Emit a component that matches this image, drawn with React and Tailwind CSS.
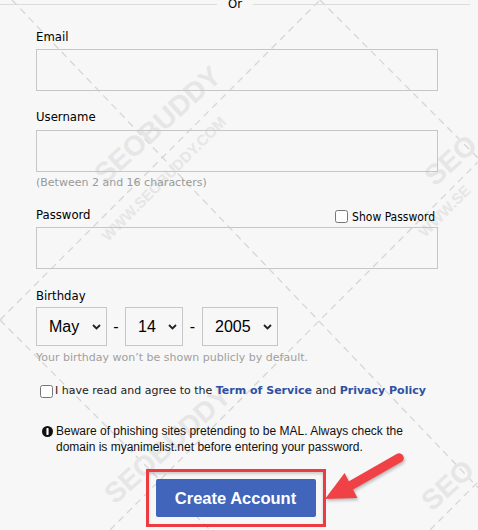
import React from 'react';

const tahoma = "font-['DejaVu_Sans_Condensed','Liberation_Sans',sans-serif]";
const verdana = "font-['DejaVu_Sans','Liberation_Sans',sans-serif]";
const arial = "font-['Liberation_Sans',Arial,sans-serif]";

const Chevron = () => (
    <svg className="absolute right-[5px] top-1/2 -translate-y-1/2 pointer-events-none" width="9" height="6" viewBox="0 0 9 6">
        <path d="M1 1l3.5 3.5L8 1" fill="none" stroke="#222" strokeWidth="1.8" />
    </svg>
);

const DateSelect = ({ width, value, options }) => (
    <div className={`relative h-[39px] border border-[#c6c6c6] ${width}`}>
        <select defaultValue={value} className={`appearance-none w-full h-full bg-transparent pl-[12px] text-[16px] text-black outline-none ${arial}`}>
            {options.map(o => <option key={o}>{o}</option>)}
        </select>
        <Chevron />
    </div>
);

const Field = ({ label, className = '' }) => (
    <label className={`block h-[16px] leading-[16px] text-[13px] text-black ${tahoma} ${className}`}>{label}</label>
);

// watermark overlay from the screenshot tool
const Watermark = () => (
    <svg className="absolute inset-0 pointer-events-none" width="478" height="530">
        <g stroke="#d6d6d6" strokeWidth="1.3" strokeDasharray="7 5" fill="none">
            <line x1="0" y1="320" x2="320" y2="0" />
            <line x1="110" y1="530" x2="478" y2="162" />
            <line x1="430" y1="530" x2="478" y2="482" />
            <line x1="12" y1="0" x2="490" y2="500" />
            <line x1="320" y1="0" x2="478" y2="158" />
            <line x1="0" y1="320" x2="210" y2="530" />
        </g>
        <g fill="#e6e6e6" fontFamily="Liberation Sans, sans-serif" fontWeight="bold">
            <text fontSize="28" transform="translate(105,185) rotate(-42)">SEOBUDDY</text>
            <text fontSize="15" transform="translate(108,242) rotate(-45)">WWW.SEOBUDDY.COM</text>
            <text fontSize="28" transform="translate(435,187) rotate(-42)">SEO</text>
            <text fontSize="15" transform="translate(425,238) rotate(-45)">WWW.SE</text>
            <text fontSize="28" transform="translate(115,505) rotate(-42)">SEOBUDDY</text>
            <text fontSize="28" transform="translate(432,512) rotate(-42)">SEO</text>
        </g>
    </svg>
);

export default function App() {
    const days = Array.from({ length: 31 }, (_, i) => String(i + 1));
    const years = Array.from({ length: 60 }, (_, i) => String(2024 - i));
    const months = ['Jan', 'Feb', 'Mar', 'Apr', 'May', 'Jun', 'Jul', 'Aug', 'Sep', 'Oct', 'Nov', 'Dec'];

    return (
        <div className="relative w-[478px] h-[530px] overflow-hidden bg-[#f7f7f7]">
            <Watermark />

            {/* divider */}
            <div className="relative flex items-center h-[20px] -mt-[6px] pr-[8px]">
                <div className="h-px flex-1 bg-[#dcdcdc]"></div>
                <span className={`px-[11px] text-[13px] leading-[20px] text-black ${tahoma}`}>Or</span>
                <div className="h-px flex-1 bg-[#dcdcdc]"></div>
            </div>

            <form className="relative ml-[36px] w-[402px]" onSubmit={e => e.preventDefault()}>
                <Field label="Email" className="mt-[15px]" />
                <input type="email" className="block mt-[4px] w-full h-[42px] border border-[#c6c6c6] bg-transparent outline-none" />

                <Field label="Username" className="mt-[18px]" />
                <input type="text" className="block mt-[5px] w-full h-[42px] border border-[#c6c6c6] bg-transparent outline-none" />
                <p className={`mt-[4px] text-[11px] leading-[14px] text-[#999] ${verdana}`}>(Between 2 and 16 characters)</p>

                <div className="mt-[17px] flex items-center justify-between h-[16px] pr-[3px]">
                    <label className={`text-[13px] leading-[16px] text-black ${tahoma}`}>Password</label>
                    <label className={`flex items-center gap-[4px] pt-[3px] text-[12px] text-black ${tahoma}`}>
                        <input type="checkbox" className="m-0 w-[13px] h-[13px]" />
                        Show Password
                    </label>
                </div>
                <input type="password" className="block mt-[4px] w-full h-[42px] border border-[#c6c6c6] bg-transparent outline-none" />

                <Field label="Birthday" className="mt-[19px]" />
                <div className="mt-[3px] flex items-center">
                    <DateSelect width="w-[71px]" value="May" options={months} />
                    <span className={`w-[18px] text-center text-[16px] text-black ${arial}`}>-</span>
                    <DateSelect width="w-[58px]" value="14" options={days} />
                    <span className={`w-[19px] text-center text-[16px] text-black ${arial}`}>-</span>
                    <DateSelect width="w-[76px]" value="2005" options={years} />
                </div>
                <p className={`mt-[5px] text-[11px] leading-[14px] text-[#a0a0a0] ${verdana}`}>Your birthday won’t be shown publicly by default.</p>

                <label className={`mt-[19px] pl-[4px] flex items-center h-[14px] whitespace-nowrap text-[11px] text-[#222] ${verdana}`}>
                    <input type="checkbox" className="m-0 w-[13px] h-[13px]" />
                    <span className="ml-[2px]">
                        I have read and agree to the <b className="text-[#2e51a2]">Term of Service</b> and <b className="text-[#2e51a2]">Privacy Policy</b>
                    </span>
                </label>

                <div className={`mt-[25px] pl-[6px] flex items-start text-[12px] leading-[16px] text-[#111] ${arial}`}>
                    <svg className="mt-[2.5px] shrink-0" width="11" height="11" viewBox="0 0 11 11">
                        <circle cx="5.5" cy="5.5" r="5.5" fill="#111" />
                        <rect x="4.4" y="2" width="2.2" height="7" rx="0.8" fill="#fff" />
                    </svg>
                    <p className="ml-[3px]">
                        Beware of phishing sites pretending to be MAL. Always check the<br />
                        domain is myanimelist.net before entering your password.
                    </p>
                </div>

                <div className="mt-[14px] flex justify-center pr-[3px]">
                    <div className="border-[3px] border-[#ee3b41] p-[7px] shadow-[inset_0_2px_3px_rgba(0,0,0,0.18)]">
                        <button type="submit" className={`block w-[160px] h-[38px] rounded-[2px] bg-[#4065ba] text-white text-[16.5px] font-bold ${arial}`}>
                            Create Account
                        </button>
                    </div>
                </div>
            </form>

            {/* annotation arrow */}
            <svg className="absolute inset-0 pointer-events-none" width="478" height="530">
                <g style={{ filter: 'drop-shadow(1px 2px 1.5px rgba(0,0,0,0.25))' }}>
                    <line x1="350" y1="486" x2="399" y2="458" stroke="#f04146" strokeWidth="9.5" strokeLinecap="round" />
                    <polygon points="325,499 344.6,473 357.4,498" fill="#f04146" />
                </g>
            </svg>
        </div>
    );
}
